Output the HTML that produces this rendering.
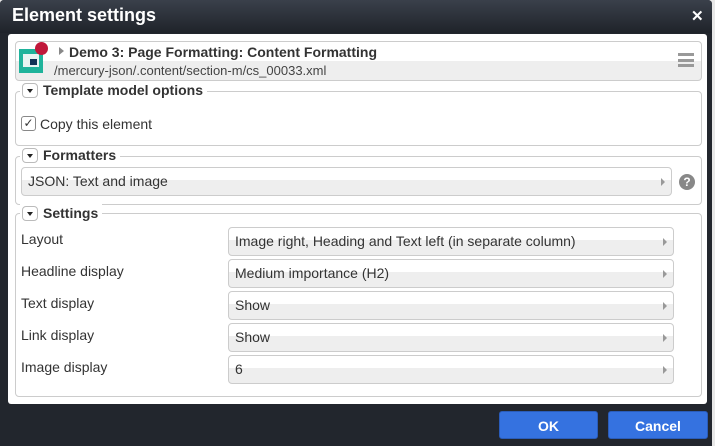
<!DOCTYPE html><html><head><style>
*{box-sizing:border-box;margin:0;padding:0}
body{width:715px;height:446px;background:#e8e8e8;font-family:"Liberation Sans",sans-serif;color:#333;position:relative;overflow:hidden}
.dlg{position:absolute;left:0;top:0;width:712px;height:446px;background:#22262d;border-radius:4px 4px 0 0}
.tb{position:absolute;left:0;top:0;width:712px;height:33px;background:linear-gradient(#3a404b,#1f232a);border-radius:4px 4px 0 0}
.tt{position:absolute;left:12px;top:5px;color:#fff;font-weight:bold;font-size:18px}
.x{position:absolute;left:691px;top:7px;color:#fff;font-weight:bold;font-size:15px}
.pn{position:absolute;left:8px;top:34px;width:699px;height:370px;background:#fff;border-radius:3px}
.bx{position:absolute;border:1px solid #ccc;border-radius:4px;background:#fff}
.lg{position:absolute;background:#fff;font-weight:bold;font-size:14px;padding:0 4px 0 2px;height:18px;line-height:18px}
.tg{display:inline-block;width:16px;height:15px;border:1px solid #bbb;border-radius:4px;vertical-align:-3px;margin-right:5px;position:relative;background:#fff}
.tg:after{content:"";position:absolute;left:4px;top:5px;border:3px solid transparent;border-top:4px solid #222}
.sel{position:absolute;height:29px;border:1px solid #ccc;border-radius:4px;background:linear-gradient(#fff 0,#fff 45%,#eee 45%);font-size:14px;line-height:27px;padding-left:6px}
.sel:after{content:"";position:absolute;right:6px;top:10px;border:4px solid transparent;border-left:4px solid #999;border-right:0}
.lb{position:absolute;left:21px;font-size:14px}
.btn{position:absolute;top:411px;height:28px;background:#3572e0;border-radius:3px;color:#fff;font-weight:bold;font-size:14px;text-align:center;line-height:28px;border:1px solid #2a5cba}
</style></head><body>
<div class="dlg"><div class="tb"><div class="tt">Element settings</div><div class="x">✕</div></div>
<div class="pn"></div>
<div class="bx" style="left:15px;top:41px;width:687px;height:40px;background:linear-gradient(#fff 0,#fff 50%,#eee 50%)">
 <div style="position:absolute;left:3px;top:7px;width:24px;height:24px;background:#1fb39b"><div style="position:absolute;left:4px;top:5px;width:16px;height:13px;background:#e8f4f2"></div><div style="position:absolute;left:11px;top:10px;width:7px;height:6px;background:#135"></div></div>
 <div style="position:absolute;left:19px;top:0px;width:13px;height:13px;border-radius:50%;background:#c0183a"></div>
 <div style="position:absolute;left:43px;top:5px;border:4px solid transparent;border-left:5px solid #888;border-right:0"></div>
 <div style="position:absolute;left:53px;top:2px;font-weight:bold;font-size:14px">Demo 3: Page Formatting: Content Formatting</div>
 <div style="position:absolute;left:38px;top:21px;font-size:13px;color:#444">/mercury-json/.content/section-m/cs_00033.xml</div>
 <div style="position:absolute;left:662px;top:11px;width:16px;height:14px;border-top:3px solid #999;border-bottom:3px solid #999"><div style="margin-top:2.5px;height:3px;background:#999"></div></div>
</div>
<div class="bx" style="left:15px;top:91px;width:687px;height:55px"></div>
<div class="lg" style="left:20px;top:81px"><span class="tg"></span>Template model options</div>
<div style="position:absolute;left:21px;top:116px;width:15px;height:15px;border:1px solid #888;border-radius:3px;font-size:12px;line-height:13px;text-align:center">✓</div>
<div class="lb" style="left:40px;top:116px">Copy this element</div>
<div class="bx" style="left:15px;top:156px;width:687px;height:49px"></div>
<div class="lg" style="left:20px;top:146px"><span class="tg"></span>Formatters</div>
<div class="sel" style="left:21px;top:167px;width:651px">JSON: Text and image</div>
<div style="position:absolute;left:679px;top:174px;width:16px;height:16px;border-radius:50%;background:#888;color:#fff;font-weight:bold;font-size:12px;text-align:center;line-height:16px">?</div>
<div class="bx" style="left:15px;top:213px;width:687px;height:184px"></div>
<div class="lg" style="left:20px;top:204px"><span class="tg"></span>Settings</div>
<div class="lb" style="top:231px">Layout</div><div class="sel" style="left:228px;top:227px;width:446px">Image right, Heading and Text left (in separate column)</div>
<div class="lb" style="top:263px">Headline display</div><div class="sel" style="left:228px;top:259px;width:446px">Medium importance (H2)</div>
<div class="lb" style="top:295px">Text display</div><div class="sel" style="left:228px;top:291px;width:446px">Show</div>
<div class="lb" style="top:327px">Link display</div><div class="sel" style="left:228px;top:323px;width:446px">Show</div>
<div class="lb" style="top:359px">Image display</div><div class="sel" style="left:228px;top:355px;width:446px">6</div>
<div class="btn" style="left:499px;width:99px">OK</div>
<div class="btn" style="left:608px;width:100px">Cancel</div>
</div>
</body></html>
